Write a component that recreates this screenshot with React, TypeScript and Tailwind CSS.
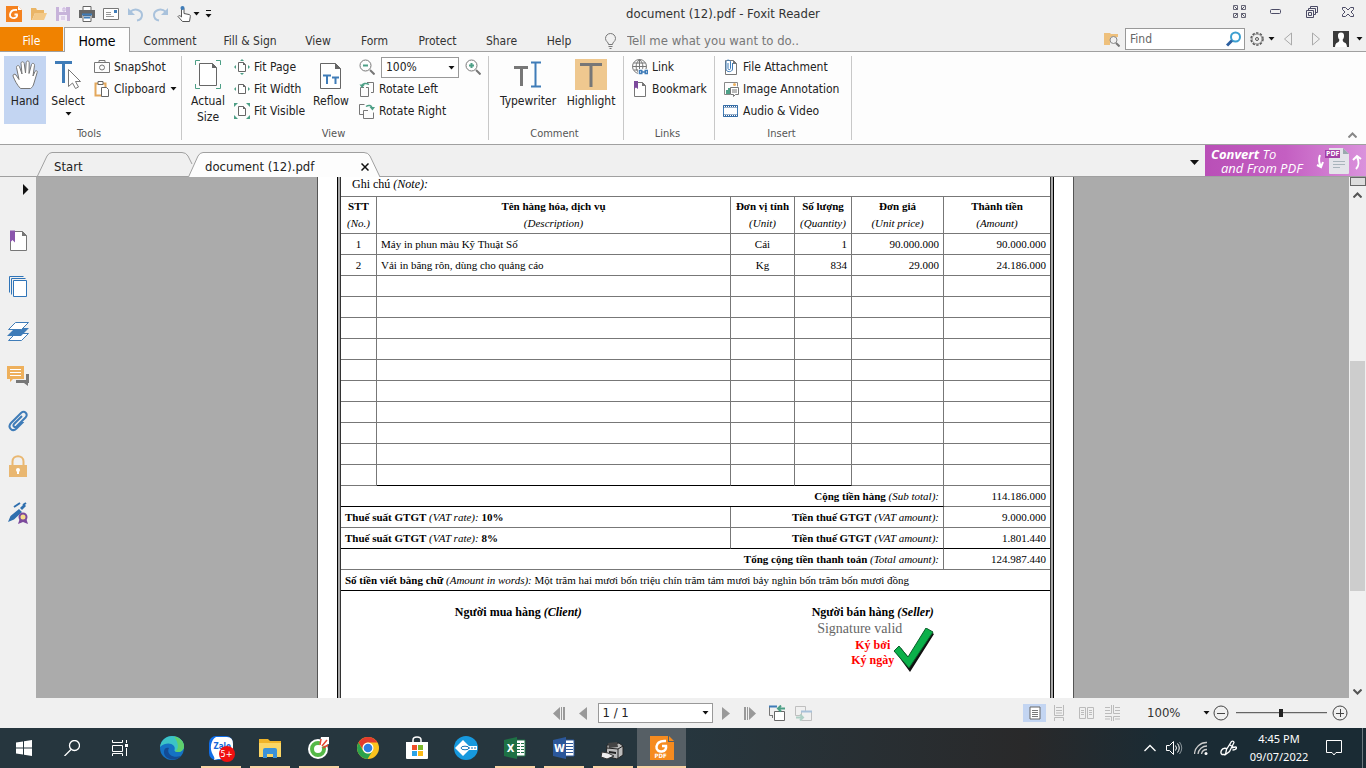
import type { ReactNode } from 'react';

type BoxProps = { w?: number; h?: number; children: ReactNode };

function Icon({ w = 16, h = 16, children }: BoxProps) {
  return (
    <svg width={w} height={h} viewBox={`0 0 ${w} ${h}`} fill="none" className="block shrink-0" aria-hidden="true">
      {children}
    </svg>
  );
}

function Caret() {
  return (
    <Icon w={7} h={4}>
      <path d="M0.500 0h6l-3 3.500z" fill="#111" />
    </Icon>
  );
}

/* ---------- title bar ---------- */

function QuickAccess() {
  return (
    <div className="flex w-[216px] items-center gap-2 pl-[6px]">
      <button aria-label="Foxit Reader">
        <Icon>
          <path d="M0 0h12l4 4v12H0z" fill="#f5821f" />
          <path d="M12 0l4 4h-4z" fill="#fff" />
          <path d="M11 4C7 3.500 4.500 5.500 4 8.500c-.3 2.500 2 4 4.500 3.500 2-.4 3-2 2.500-3.500H8.500" stroke="#fff" strokeWidth="1.800" />
        </Icon>
      </button>
      <button aria-label="Open" className="ml-px">
        <Icon>
          <path d="M0 2h5l1 2h7v3H4l-3 7H0z" fill="#eab566" />
          <path d="M4 7h12l-3 7H1z" fill="#f3c988" />
        </Icon>
      </button>
      <button aria-label="Save">
        <Icon>
          <path d="M1 1h14v14H1z" fill="#c7b3da" />
          <path d="M4 1h7v5H4zM4 9h8v6H4z" fill="#f3eef8" />
          <path d="M8 2h2v3H8zM6 11h4M6 13h4" stroke="#c7b3da" />
        </Icon>
      </button>
      <button aria-label="Print">
        <Icon>
          <path d="M4 0.500h8v4H4z" fill="#fff" stroke="#666" />
          <path d="M0 4h16v8h-3v-3H3v3H0z" fill="#666" />
          <path d="M4 9.500h8v6H4z" fill="#fff" stroke="#666" />
          <path d="M3 8.500h10M5 11.500h6" stroke="#3f7cb8" strokeWidth="2" />
        </Icon>
      </button>
      <button aria-label="Email">
        <Icon>
          <path d="M0.500 2.500h15v11h-15z" fill="#fff" stroke="#777" />
          <path d="M3 6.500h5M3 8.500h5M3 10.500h8" stroke="#999" />
          <path d="M11 4h3v3h-3z" fill="#3f7cb8" />
        </Icon>
      </button>
      <button aria-label="Undo" className="ml-px">
        <Icon>
          <path d="M2 6c5-4.500 12-2 12 3 0 3-2 5-5 5.500" stroke="#a9c2dc" strokeWidth="2" />
          <path d="M0 2v7h7z" fill="#a9c2dc" />
        </Icon>
      </button>
      <button aria-label="Redo">
        <Icon>
          <path d="M14 6C9 1.500 2 4 2 9c0 3 2 5 5 5.500" stroke="#a9c2dc" strokeWidth="2" />
          <path d="M16 2v7H9z" fill="#a9c2dc" />
        </Icon>
      </button>
      <button aria-label="Touch mode" className="flex items-center gap-px">
        <Icon>
          <path d="M5.500 9V3a1.200 1.200 0 0 1 2.500 0v4.500l5 1c1.200.3 1.500 1 1.300 2L13.500 15.500H6.500L2 10.500c.8-1.300 2-1 3.500.5z" fill="#fff" stroke="#555" />
          <circle cx="6.500" cy="2" r="2" fill="#3f7cb8" />
        </Icon>
        <Caret />
      </button>
      <button aria-label="Customize toolbar" className="-ml-[3px]">
        <Icon w={7} h={8}>
          <path d="M1 0.500h5" stroke="#111" />
          <path d="M0.500 4h6l-3 3.500z" fill="#111" />
        </Icon>
      </button>
    </div>
  );
}

function WindowButtons() {
  return (
    <div className="flex w-[136px] items-center justify-between pr-[12px] pl-[3px] pb-1">
      <button aria-label="Full screen">
        <Icon w={13} h={13}>
          <path d="M0.500 0.500h4v4h-4zM8.500 0.500h4v4h-4zM0.500 8.500h4v4h-4zM8.500 8.500h4v4h-4z" stroke="#667" />
          <path d="M1.500 1.500l3 3M11.500 1.500l-3 3M1.500 11.500l3-3M11.500 11.500l-3-3" stroke="#556" />
        </Icon>
      </button>
      <button aria-label="Minimize">
        <Icon w={12} h={6}>
          <rect x="0.500" y="0.500" width="10" height="4" rx="1" stroke="#4c4c66" />
        </Icon>
      </button>
      <button aria-label="Restore">
        <Icon w={12} h={12}>
          <path d="M0.500 4.500h7v7h-7zM2.500 6.500h3v3h-3z" stroke="#4c4c66" />
          <path d="M2.500 4.500v-2h7v6h-2M4.500 2.500v-2h7v6h-2" stroke="#4c4c66" />
        </Icon>
      </button>
      <button aria-label="Close">
        <Icon w={12} h={10}>
          <path d="M0.500 0.500h3L6 3l2.500-2.500h3v2L9 5l2.500 2.500v2h-3L6 7 3.500 9.500h-3v-2L3 5 0.500 2.500z" stroke="#4c4c66" />
        </Icon>
      </button>
    </div>
  );
}

/* ---------- ribbon tabs ---------- */

function RibbonTabs() {
  const tab = 'h-[24px] pt-[3px] text-center text-[12px] text-[#333]';
  return (
    <nav className="flex h-[25px] items-end border-b border-[#a0a0a0]">
      <button className="h-[24px] w-[63px] bg-[#f08200] pt-[3px] text-center text-[12px] text-white">File</button>
      <button className="relative z-10 ml-px -mb-px h-[25px] w-[66px] border border-b-0 border-[#a0a0a0] bg-[#fdfdfd] pt-[2px] text-center text-[14px] text-black">
        Home
      </button>
      <button className={`${tab} w-[80px]`}>Comment</button>
      <button className={`${tab} w-[80px]`}>Fill &amp; Sign</button>
      <button className={`${tab} w-[56px]`}>View</button>
      <button className={`${tab} w-[57px]`}>Form</button>
      <button className={`${tab} w-[69px]`}>Protect</button>
      <button className={`${tab} w-[59px]`}>Share</button>
      <button className={`${tab} w-[56px]`}>Help</button>
      <label className="ml-[17px] flex h-[24px] flex-1 items-center gap-[10px] pt-[3px]">
        <Icon w={13} h={16}>
          <path d="M4.500 11.500C4.500 9 1.500 8.500 1.500 5.500a5 5 0 0 1 10 0c0 3-3 3.500-3 6zM4.500 13.500h4M5.500 15.500h2" stroke="#777" />
        </Icon>
        <input
          type="text"
          placeholder="Tell me what you want to do.."
          className="w-[220px] bg-transparent outline-none placeholder:text-[#777]"
        />
      </label>
      <div className="flex h-[24px] items-center pr-[3px]">
        <button aria-label="Advanced search">
          <Icon>
            <path d="M0 2h6l1 1h7v3H6v8H0z" fill="#eec07c" />
            <circle cx="9.500" cy="9" r="3.500" fill="#f0f0f0" stroke="#888" />
            <path d="M12 12l3.500 3.500" stroke="#777" strokeWidth="2" />
          </Icon>
        </button>
        <label className="ml-[5px] flex h-[22px] w-[120px] items-center border border-[#999] bg-white pr-[2px] pl-1">
          <input type="text" placeholder="Find" aria-label="Find" className="min-w-0 flex-1 text-[12px] outline-none placeholder:text-[#666]" />
          <Icon>
            <circle cx="9.500" cy="6" r="4.500" stroke="#3c9fd0" strokeWidth="2" />
            <path d="M6 9.500L1 14.500" stroke="#2c5fa0" strokeWidth="3" />
          </Icon>
        </label>
        <button aria-label="Settings" className="ml-[5px] flex items-center gap-1">
          <Icon w={14} h={14}>
            <circle cx="7" cy="7" r="6" stroke="#555" strokeWidth="1.500" strokeDasharray="2.400 1.400" />
            <circle cx="7" cy="7" r="5" stroke="#888" />
            <circle cx="7" cy="7" r="1.500" stroke="#555" />
          </Icon>
          <Caret />
        </button>
        <button aria-label="Previous" className="ml-[8px]">
          <Icon w={10} h={14}>
            <path d="M8.500 1v12L1.500 7z" stroke="#aaa" />
          </Icon>
        </button>
        <button aria-label="Next" className="ml-[18px]">
          <Icon w={10} h={14}>
            <path d="M1.500 1v12l7-6z" stroke="#aaa" />
          </Icon>
        </button>
        <button aria-label="Account" className="ml-[12px] flex items-center gap-[7px]">
          <Icon>
            <path d="M0 0h16v16H0z" fill="#3a3a3a" />
            <path d="M8 1.500c2.300 0 3.300 1.500 3 4-.2 1.500-.7 2.500-1.300 3 0 2 .5 2.500 2.300 3.200 1.200.5 1.800 2 2 4.300H2c.2-2.300.8-3.800 2-4.300 1.800-.7 2.300-1.200 2.300-3.200C5.700 8 5.200 7 5 5.500c-.3-2.500.7-4 3-4z" fill="#fff" />
          </Icon>
          <Caret />
        </button>
      </div>
    </nav>
  );
}

/* ---------- ribbon ---------- */

function Group({ label, width, pad, children }: { label: string; width: string; pad: string; children: ReactNode }) {
  return (
    <section className={`${width} my-[4px] flex shrink-0 flex-col border-r border-[#c8c8c8]`}>
      <div className={`${pad} flex flex-1`}>{children}</div>
      <p className="h-[13px] pr-[3px] text-center text-[11px] leading-[13px] text-[#555]">{label}</p>
    </section>
  );
}

function Big({ icon, width, on, children }: { icon: ReactNode; width: string; on?: boolean; children: ReactNode }) {
  return (
    <button className={`${width} ${on ? 'bg-[#c3d5f2]' : ''} flex h-[68px] shrink-0 flex-col items-center pt-[3px] leading-4`}>
      {icon}
      <span className="mt-[2px] flex flex-col items-center">{children}</span>
    </button>
  );
}

function Small({ icon, children }: { icon: ReactNode; children: ReactNode }) {
  return (
    <button className="flex h-[22px] items-center gap-[4px] whitespace-nowrap">
      {icon}
      {children}
    </button>
  );
}

function PageGlyph({ x = 4, y = 3 }: { x?: number; y?: number }) {
  return (
    <g transform={`translate(${x} ${y})`}>
      <path d="M0.500 0.500h5l2 2.500v6.500h-7z" fill="#fff" stroke="#666" />
      <path d="M5 0v3h3z" fill="#666" />
    </g>
  );
}

function Ribbon() {
  return (
    <div className="flex h-[93px] border-b border-[#a0a0a0] bg-[#fdfdfd] text-[12px]">
      <Group label="Tools" width="w-[182px]" pad="pl-1">
        <Big
          width="w-[42px]"
          on
          icon={
            <Icon w={26} h={32}>
              <path
                d="M8.500 29.500C5 26 2.500 21 1 17c-.3-1.600 1.800-2.600 3-1l3 4.500-2.500-12c-.3-2 2.400-2.700 3-.8L10 15 9 4.500c0-2.200 2.800-2.300 3.200-.2L13.500 14l.7-10.500c.2-2 3-2 3 .2L17 14.500l2.500-9c.7-1.900 3.200-1.200 3 .8L21 17l2-4.500c1-1.500 2.700-.7 2.200.8L22 24c-.7 3-2 4.500-3.500 5.500z"
                fill="#fff"
                stroke="#777"
              />
            </Icon>
          }
        >
          Hand
        </Big>
        <Big
          width="w-[44px]"
          icon={
            <Icon w={28} h={32}>
              <path d="M1 3.500h17M9.500 3v21" stroke="#3f7cb8" strokeWidth="3" />
              <path d="M14.500 10.500v17l4-3.500 3 5.500 3-1.500-3-5.500h5z" fill="#fff" stroke="#777" />
            </Icon>
          }
        >
          Select
          <span className="mt-[3px]">
            <Caret />
          </span>
        </Big>
        <div className="ml-1 flex flex-col">
          <Small
            icon={
              <Icon>
                <path d="M0.500 3.500h15v10h-15zM5 3V1.500h6V3" stroke="#777" />
                <circle cx="8" cy="8.500" r="2.500" stroke="#777" />
              </Icon>
            }
          >
            SnapShot
          </Small>
          <Small
            icon={
              <Icon>
                <path d="M1.500 2.500h10v12h-10z" stroke="#e3a85c" strokeWidth="2" />
                <path d="M4 0.500h5v3H4z" fill="#fff" stroke="#666" />
                <path d="M7.500 6.500h5l2 2v7h-7z" fill="#fff" stroke="#666" />
              </Icon>
            }
          >
            Clipboard
            <Caret />
          </Small>
        </div>
      </Group>

      <Group label="View" width="w-[307px]" pad="pl-1">
        <Big
          width="w-[44px]"
          icon={
            <Icon w={28} h={32}>
              <path d="M6 1.500H1.500V6M22 1.500h4.500V6M1.500 25v4.500H6M26.500 25v4.500H22" stroke="#4d9f86" />
              <path d="M5.500 4.500h13l4 4v18h-17z" fill="#fff" stroke="#666" />
              <path d="M18 4v5h5z" fill="#666" />
            </Icon>
          }
        >
          Actual
          <span>Size</span>
        </Big>
        <div className="ml-1 flex flex-col">
          <Small
            icon={
              <Icon>
                <PageGlyph />
                <path d="M8 0l2 2H6zM8 16l2-2H6zM0 8l2-2v4zM16 8l-2-2v4z" fill="#4d9f86" />
              </Icon>
            }
          >
            Fit Page
          </Small>
          <Small
            icon={
              <Icon>
                <PageGlyph />
                <path d="M0 8l2-2v4zM16 8l-2-2v4z" fill="#4d9f86" />
              </Icon>
            }
          >
            Fit Width
          </Small>
          <Small
            icon={
              <Icon>
                <PageGlyph />
                <path d="M0 0h4L0 4zM16 0v4l-4-4zM0 16v-4l4 4zM16 16h-4l4-4z" fill="#4d9f86" />
              </Icon>
            }
          >
            Fit Visible
          </Small>
        </div>
        <div className="ml-auto flex">
          <Big
            width="w-[44px]"
            icon={
              <Icon w={24} h={32}>
                <path d="M1.500 4.500h15l5 5v20h-20z" fill="#fff" stroke="#666" />
                <path d="M16 4v6h6z" fill="#666" />
                <path d="M4 16.500h8M8 16v9M13 18.500h7M16.500 18v7" stroke="#3f7cb8" strokeWidth="2" />
              </Icon>
            }
          >
            Reflow
          </Big>
          <div className="ml-[6px] flex w-[129px] flex-col">
            <div className="flex h-[22px] items-center gap-[6px]">
              <button aria-label="Zoom out">
                <Icon>
                  <circle cx="6.500" cy="6.500" r="5.500" stroke="#777" />
                  <path d="M11 11l4.500 4.500" stroke="#777" strokeWidth="2" />
                  <path d="M4 6.500h5" stroke="#4d9f86" strokeWidth="2" />
                </Icon>
              </button>
              <div className="relative">
                <select aria-label="Zoom level" className="block h-[21px] w-[78px] appearance-none border border-[#999] bg-white pl-1 leading-4">
                  <option>100%</option>
                </select>
                <span className="pointer-events-none absolute top-[9px] right-1">
                  <Caret />
                </span>
              </div>
              <button aria-label="Zoom in">
                <Icon>
                  <circle cx="6.500" cy="6.500" r="5.500" stroke="#777" />
                  <path d="M11 11l4.500 4.500" stroke="#777" strokeWidth="2" />
                  <path d="M4 6.500h5M6.500 4v5" stroke="#4d9f86" strokeWidth="2" />
                </Icon>
              </button>
            </div>
            <Small
              icon={
                <Icon>
                  <path d="M8 1.500h6.500v10H12M5 6.500H1.500v9h8v-9H7" stroke="#777" />
                  <path d="M10 3.500C7 1.500 3.500 2.500 3 5" stroke="#4d9f86" strokeWidth="1.500" />
                  <path d="M0.500 3.500h5.500L3 7z" fill="#4d9f86" />
                </Icon>
              }
            >
              Rotate Left
            </Small>
            <Small
              icon={
                <Icon>
                  <path d="M4.500 11.500h-4v-10h5M9 7.500H4.500v8h10v-6" stroke="#777" />
                  <path d="M7 3.500c3-2 5.500-1 6 1.500" stroke="#4d9f86" strokeWidth="1.500" />
                  <path d="M10.500 4h5.500l-2.500 3.500z" fill="#4d9f86" />
                </Icon>
              }
            >
              Rotate Right
            </Small>
          </div>
        </div>
      </Group>

      <Group label="Comment" width="w-[135px]" pad="pl-[6px]">
        <Big
          width="w-[66px]"
          icon={
            <Icon w={30} h={32}>
              <path d="M1 8.500h14M8.500 8v19" stroke="#777" strokeWidth="3" />
              <path d="M18 3.500h4.500v23M28 3.500h-5.500M18 27.500h10" stroke="#3f7cb8" strokeWidth="2" />
            </Icon>
          }
        >
          Typewriter
        </Big>
        <Big
          width="w-[60px]"
          icon={
            <Icon w={32} h={32}>
              <path d="M0 0h32v31H0z" fill="#efc88f" />
              <path d="M5 5.500h22M16 5v23" stroke="#777" strokeWidth="3" />
            </Icon>
          }
        >
          Highlight
        </Big>
      </Group>

      <Group label="Links" width="w-[91px]" pad="pl-[8px]">
        <div className="flex flex-col">
          <Small
            icon={
              <Icon>
                <circle cx="7.500" cy="7.500" r="7" stroke="#777" />
                <path d="M7.500 0.500v14M0.500 7.500h14M1.500 4h12M2 11h8M7.500 0.500c-4.500 4-4.500 10 0 14M7.500 0.500c4.500 4 4.500 10 0 14" stroke="#777" />
                <path d="M6 10h10v6H6z" fill="#fdfdfd" />
                <path d="M10.500 11.500h-3v3h3M12.500 11.500h3v3h-3M9 13h5" stroke="#3f7cb8" strokeWidth="1.500" />
              </Icon>
            }
          >
            Link
          </Small>
          <Small
            icon={
              <Icon>
                <path d="M2.500 1.500h8l3 3v11h-11z" fill="#fff" stroke="#777" />
                <path d="M10 1v4h4z" fill="#777" />
                <path d="M2 0h4v8L4 6.500 2 8z" fill="#7c4a9c" />
              </Icon>
            }
          >
            Bookmark
          </Small>
        </div>
      </Group>

      <Group label="Insert" width="w-[137px]" pad="pl-[8px]">
        <div className="flex flex-col">
          <Small
            icon={
              <Icon>
                <path d="M3.500 1.500h7l3 3v11h-11v-14z" fill="#fff" stroke="#777" />
                <path d="M10 1v4h4z" fill="#777" />
                <path d="M5 4v5.500c0 1.500 2.500 1.500 2.500 0V3c0-2.500-4.500-2.500-4.500 0v7c0 3.500 6.500 3.500 6.500 0V4" stroke="#3f7cb8" />
              </Icon>
            }
          >
            File Attachment
          </Small>
          <Small
            icon={
              <Icon>
                <path d="M7 13.500H1.500v-12h13v4" stroke="#888" />
                <circle cx="11.500" cy="3.500" r="1.500" fill="#eeb05c" />
                <path d="M3 13V9h2v4zM5 7h2v6H5z" fill="#4d9f86" />
                <path d="M7.500 6.500h8v7h-3l-2 2v-2h-3z" fill="#fff" stroke="#777" />
                <path d="M9 9h5M9 11h5" stroke="#777" />
              </Icon>
            }
          >
            Image Annotation
          </Small>
          <Small
            icon={
              <Icon>
                <path d="M0.500 2.500h14v11h-14z" fill="#fff" stroke="#3f7cb8" />
                <path d="M0 3.500h15M0 12.500h15" stroke="#2f6299" strokeWidth="2" />
                <path d="M1 3.500h14M1 12.500h14" stroke="#fff" strokeDasharray="1 1" />
              </Icon>
            }
          >
            Audio &amp; Video
          </Small>
        </div>
      </Group>
      <div className="flex flex-1 items-end justify-end pr-[9px] pb-[6px]">
        <button aria-label="Collapse ribbon">
          <Icon w={9} h={6}>
            <path d="M0.500 5.500l4-4 4 4" stroke="#888" strokeWidth="2" />
          </Icon>
        </button>
      </div>
    </div>
  );
}

/* ---------- document tabs ---------- */

function DocTabs() {
  return (
    <div className="flex h-[32px] items-end border-b border-[#a0a0a0]">
      <button className="relative ml-[37px] h-[24px] w-[158px] pt-[5px] pl-[17px] text-left">
        <svg width="158" height="24" viewBox="0 0 158 24" className="absolute top-0 left-0" aria-hidden="true">
          <path d="M0.500 24L10 4q2-3.500 5-3.500h130q4 0 6 3.500l4 8" fill="#f0f0f0" stroke="#a0a0a0" />
        </svg>
        <span className="relative">Start</span>
      </button>
      <div className="relative z-10 -mb-px -ml-[7px] flex h-[25px] w-[193px] items-center pt-[4px] pr-[12px] pl-[17px]">
        <svg width="193" height="25" viewBox="0 0 193 25" className="absolute top-0 left-0" aria-hidden="true">
          <path d="M0.500 25L10 4q2-3.500 5-3.500h161q4 0 6 3.500l10 21" fill="#fdfdfd" stroke="#a0a0a0" />
        </svg>
        <button className="relative flex-1 text-left">document (12).pdf</button>
        <button aria-label="Close tab" className="relative">
          <Icon w={8} h={8}>
            <path d="M0.500 0.500l7 7M7.500 0.500l-7 7" stroke="#111" strokeWidth="1.500" />
          </Icon>
        </button>
      </div>
      <button aria-label="Tab list" className="mr-[6px] mb-[11px] ml-auto">
        <Icon w={9} h={5}>
          <path d="M0 0h9L4.500 5z" fill="#111" />
        </Icon>
      </button>
      <a
        href="#convert"
        className="flex h-[31px] w-[161px] items-center justify-between bg-linear-to-r from-[#b94fb7] via-[#c45fc2] to-[#da92dc] pl-[6px] font-['Open_Sans',sans-serif] text-[13px] leading-[14px] text-white italic"
      >
        <span>
          <b>Convert</b> To
          <span className="block pl-[10px]">and From PDF</span>
        </span>
        <span className="relative">
          <Icon w={50} h={31}>
            <path d="M13 3h14l6 6v19q0 1-1 1H14q-1 0-1-1z" fill="#e4e4ea" />
            <path d="M27 3l6 6h-6z" fill="#9aa9ae" />
            <path d="M17 16.500h12M17 19.500h12M17 22.500h7" stroke="#a9b4bc" />
            <path d="M4 10c-2 5-1 8 1 12M1 20l4 2 2-5" stroke="#fff" strokeWidth="2" />
            <path d="M40 24c3-3 3-8 1-12M37 15l4-4 4 3" stroke="#fff" strokeWidth="2" />
          </Icon>
          <b className="absolute top-[5px] left-[9px] bg-[#a33fa6] px-px text-[7px] leading-[8px] not-italic">PDF</b>
        </span>
      </a>
    </div>
  );
}

/* ---------- side panel ---------- */

function SideBar() {
  return (
    <aside className="flex w-[36px] shrink-0 flex-col items-center">
      <button aria-label="Expand panel" className="mt-[7px] mr-[7px] self-end">
        <Icon w={7} h={11}>
          <path d="M1 0l5.500 5.500L1 11z" fill="#111" />
        </Icon>
      </button>
      <div className="mt-[35px] flex flex-col gap-[23px]">
        <button aria-label="Bookmarks">
          <Icon w={22} h={22}>
            <path d="M3.500 1.500h12l4 4v15h-16z" fill="#fff" stroke="#777" />
            <path d="M15 1v5h5z" fill="#777" />
            <path d="M3 0.500h5v12L5.500 10 3 12.500z" fill="#8a56ac" />
          </Icon>
        </button>
        <button aria-label="Pages">
          <Icon w={22} h={22}>
            <path d="M2.500 17.500v-16h14M4.500 19.500v-16h14" stroke="#2f74b8" />
            <path d="M6.500 5.500h13v16h-13z" fill="#fff" stroke="#2f74b8" />
          </Icon>
        </button>
        <button aria-label="Layers">
          <Icon w={22} h={22}>
            <path d="M8.500 13.500h13l-7 7h-13z" fill="#fff" stroke="#3f7cb8" />
            <path d="M8 8h14l-8 8H0z" fill="#3f7cb8" />
            <path d="M8.500 2.500h13l-7 7h-13z" fill="#fff" stroke="#3f7cb8" />
          </Icon>
        </button>
        <button aria-label="Comments">
          <Icon w={22} h={22}>
            <path d="M19 9h3v9h-1v3l-4-3h-8v-3h10z" fill="#777" />
            <path d="M0 1h17v13H6l-3 3v-3H0z" fill="#eeb05c" />
            <path d="M3 4.500h11M3 7.500h11M3 10.500h11" stroke="#fff" />
          </Icon>
        </button>
        <button aria-label="Attachments">
          <Icon w={22} h={22}>
            <path d="M15 6l-8 8c-1.500 2 .5 4 2.500 2.500l9-9c3-3.500-1-7.500-4.500-4.500l-10 10c-4 4.500 1.500 9.500 5.500 5.500l7-7" stroke="#3f7cb8" strokeWidth="2" />
          </Icon>
        </button>
        <button aria-label="Security">
          <Icon w={22} h={22}>
            <path d="M5.500 11V6.500c0-7 11-7 11 0V11" stroke="#e9b771" strokeWidth="2" />
            <path d="M2 10h18v12H2z" fill="#e9b771" />
            <circle cx="11" cy="15" r="2" fill="#fff" />
            <path d="M10 15h2v4h-2z" fill="#fff" />
          </Icon>
        </button>
        <button aria-label="Digital signatures" className="mt-[2px]">
          <Icon w={22} h={22}>
            <path d="M1 20l2.500-6L12 7l3 3-8 7.500zM13 6l4-4 2 2-4 4z" fill="#2f6fae" />
            <path d="M7 5l6-4M16 3l3-2" stroke="#2f6fae" strokeWidth="2" />
            <path d="M13 16l-2 6 5-2 5 2-2-6z" fill="#7c4a9c" />
            <circle cx="16" cy="15" r="3.500" fill="#f6dc8a" stroke="#7c4a9c" strokeWidth="2" />
          </Icon>
        </button>
      </div>
    </aside>
  );
}

/* ---------- invoice ---------- */

const heads = [
  ['STT', '(No.)'],
  ['Tên hàng hóa, dịch vụ', '(Description)'],
  ['Đơn vị tính', '(Unit)'],
  ['Số lượng', '(Quantity)'],
  ['Đơn giá', '(Unit price)'],
  ['Thành tiền', '(Amount)'],
];

const items = [
  ['1', 'Máy in phun màu Kỹ Thuật Số', 'Cái', '1', '90.000.000', '90.000.000'],
  ['2', 'Vải in băng rôn, dùng cho quảng cáo', 'Kg', '834', '29.000', '24.186.000'],
  ...Array.from({ length: 10 }, () => ['', '', '', '', '', '']),
];

const aligns = ['text-center', 'text-left', 'text-center', 'text-right', 'text-right', 'text-right'];

function Invoice() {
  const cell = 'h-[21px] border-b px-1 pb-px leading-4 whitespace-nowrap';
  const grey = 'border-[#777]';
  return (
    <div className="h-full w-[757px] shrink-0 border-x border-[#555] bg-white px-[19px] font-['Liberation_Serif',serif] text-[11px] text-black">
      <div className="h-full border-x border-black bg-[#aaa] px-[2px]">
        <div className="h-full border-x border-[#333] bg-white">
          <p className="h-[19px] pl-[11px] text-[12px] leading-[14px]">
            Ghi chú <i>(Note):</i>
          </p>
          <table className="w-full table-fixed border-separate border-spacing-0">
            <colgroup>
              <col className="w-[36px]" />
              <col />
              <col className="w-[64px]" />
              <col className="w-[57px]" />
              <col className="w-[92px]" />
              <col className="w-[106px]" />
            </colgroup>
            <thead>
              <tr>
                {heads.map(([vi, en], i) => (
                  <th key={vi} className={`h-[38px] border-y ${i < 5 ? 'border-r' : ''} ${grey} p-0 pb-px leading-[17px] whitespace-nowrap`}>
                    {vi}
                    <i className="block font-normal">{en}</i>
                  </th>
                ))}
              </tr>
            </thead>
            <tbody>
              {items.map((row, r) => (
                <tr key={r}>
                  {row.map((text, c) => (
                    <td
                      key={c}
                      className={`${cell} ${aligns[c]} ${c < 5 ? 'border-r' : ''} ${grey} ${r === 11 && c > 0 && c < 4 ? 'border-b-black' : ''}`}
                    >
                      {text}
                    </td>
                  ))}
                </tr>
              ))}
              <tr>
                <td colSpan={5} className={`${cell} border-r border-r-[#777] border-b-black text-right`}>
                  <b>Cộng tiền hàng</b> <i>(Sub total):</i>
                </td>
                <td className={`${cell} ${grey} text-right`}>114.186.000</td>
              </tr>
              <tr>
                <td colSpan={2} className={`${cell} ${grey} border-r`}>
                  <b>Thuế suất GTGT</b> <i>(VAT rate):</i> <b>10%</b>
                </td>
                <td colSpan={3} className={`${cell} ${grey} border-r text-right`}>
                  <b>Tiền thuế GTGT</b> <i>(VAT amount):</i>
                </td>
                <td className={`${cell} ${grey} text-right`}>9.000.000</td>
              </tr>
              <tr>
                <td colSpan={2} className={`${cell} border-r border-r-[#777] border-b-black`}>
                  <b>Thuế suất GTGT</b> <i>(VAT rate):</i> <b>8%</b>
                </td>
                <td colSpan={3} className={`${cell} border-r border-r-[#777] border-b-black text-right`}>
                  <b>Tiền thuế GTGT</b> <i>(VAT amount):</i>
                </td>
                <td className={`${cell} border-black text-right`}>1.801.440</td>
              </tr>
              <tr>
                <td colSpan={5} className={`${cell} ${grey} border-r text-right`}>
                  <b>Tổng cộng tiền thanh toán</b> <i>(Total amount):</i>
                </td>
                <td className={`${cell} ${grey} text-right`}>124.987.440</td>
              </tr>
              <tr>
                <td colSpan={6} className={`${cell} border-black`}>
                  <b>Số tiền viết bằng chữ</b> <i>(Amount in words):</i> Một trăm hai mươi bốn triệu chín trăm tám mươi bảy nghìn bốn trăm bốn mươi đồng
                </td>
              </tr>
            </tbody>
          </table>
          <div className="grid grid-cols-2 pt-[13px] text-center text-[12px] leading-4 font-bold">
            <p>
              Người mua hàng <i>(Client)</i>
            </p>
            <div className="relative">
              <p>
                Người bán hàng <i>(Seller)</i>
              </p>
              <p className="pr-[26px] text-[14px] leading-[18px] font-normal text-[#666]">Signature valid</p>
              <p className="leading-[15px] text-[#f00]">Ký bởi</p>
              <p className="leading-[15px] text-[#f00]">Ký ngày</p>
              <span className="absolute top-[24px] left-[197px]">
                <Icon w={44} h={44}>
                  <path d="M3 25l5-5 8 10L35 2l6 4-24 38z" fill="#111" />
                  <path d="M1 23l5-5 9 11L33 0l7 4-24 36z" fill="#0bb04a" stroke="#0a5f2a" />
                </Icon>
              </span>
            </div>
          </div>
        </div>
      </div>
    </div>
  );
}

function ScrollBar() {
  return (
    <div className="flex w-[17px] shrink-0 flex-col items-center bg-[#f0f0f0] pb-[3px]">
      <button aria-label="Split view" className="h-[9px] w-[16px] border border-[#666] bg-[#ddd]" />
      <button aria-label="Scroll up" className="mt-[6px]">
        <Icon w={9} h={6}>
          <path d="M0.500 5.500l4-4 4 4" stroke="#555" strokeWidth="2" />
        </Icon>
      </button>
      <div className="flex w-[15px] flex-1 flex-col">
        <div className="flex-[163]" />
        <div className="flex-[229] bg-[#cdcdcd]" />
        <div className="flex-[98]" />
      </div>
      <button aria-label="Scroll down">
        <Icon w={9} h={6}>
          <path d="M0.500 0.500l4 4 4-4" stroke="#555" strokeWidth="2" />
        </Icon>
      </button>
    </div>
  );
}

/* ---------- status bar ---------- */

function StatusBar() {
  return (
    <footer className="flex h-[30px] shrink-0 items-center">
      <div className="flex-1" />
      <div className="flex items-center pl-4">
        <button aria-label="First page">
          <Icon w={13} h={13}>
            <path d="M7 0v13L0 6.500zM8 0h1v13H8zM10 0h2v13h-2z" fill="#999" />
          </Icon>
        </button>
        <button aria-label="Previous page" className="ml-[13px]">
          <Icon w={8} h={13}>
            <path d="M8 0v13L0 6.500z" fill="#999" />
          </Icon>
        </button>
        <div className="relative ml-[11px]">
          <select aria-label="Page" className="block h-[20px] w-[115px] appearance-none border border-[#999] bg-white pl-1 leading-4">
            <option>1 / 1</option>
          </select>
          <span className="pointer-events-none absolute top-[8px] right-1">
            <Caret />
          </span>
        </div>
        <button aria-label="Next page" className="ml-[9px]">
          <Icon w={8} h={13}>
            <path d="M0 0v13l8-6.500z" fill="#999" />
          </Icon>
        </button>
        <button aria-label="Last page" className="ml-[14px]">
          <Icon w={13} h={13}>
            <path d="M5 0v13l7-6.500zM3 0h1v13H3zM0 0h2v13H0z" fill="#999" />
          </Icon>
        </button>
        <button aria-label="Previous view" className="ml-[12px]">
          <Icon w={17} h={16}>
            <path d="M4 10.500H0.500v-9H8M3.500 10v3" stroke="#777" />
            <path d="M0 1.500h8" stroke="#3f7cb8" strokeWidth="2" />
            <path d="M5.500 6.500h10v9h-10z" fill="#fff" stroke="#666" />
            <path d="M9 3.500h7M12 0.500l-3 3 3 3" stroke="#4d9f86" strokeWidth="2" />
          </Icon>
        </button>
        <button aria-label="Next view" className="ml-[9px] opacity-40">
          <Icon w={17} h={16}>
            <path d="M0.500 1.500h10v9h-10z" stroke="#777" />
            <path d="M6.500 6.500h10v9h-10z" fill="#f0f0f0" stroke="#777" />
            <path d="M6 6.500h11" stroke="#3f7cb8" strokeWidth="2" />
            <path d="M1 12.500h7M5 9.500l3 3-3 3" stroke="#4d9f86" strokeWidth="2" />
          </Icon>
        </button>
      </div>
      <div className="flex flex-1 items-center justify-end pr-[18px]">
        <button aria-label="Single page" className="flex h-[18px] w-[23px] items-center justify-center bg-[#c3d5f2]">
          <Icon w={12} h={14}>
            <path d="M1 1h10v12H1z" fill="#fff" stroke="#666" />
            <path d="M3 4.500h6M3 6.500h6M3 8.500h6M3 10.500h6" stroke="#777" />
          </Icon>
        </button>
        <button aria-label="Continuous" className="ml-[7px]">
          <Icon w={12} h={16}>
            <path d="M1.500 0v10.500h9V0M1.500 16v-3.500h9V16M3 2.500h6M3 5.500h6M3 8h6" stroke="#bbb" />
          </Icon>
        </button>
        <button aria-label="Facing" className="ml-[14px]">
          <Icon w={16} h={14}>
            <path d="M0.500 1.500h6v11h-6zM8.500 1.500h6v11h-6zM2 4.500h3M2 6.500h3M2 8.500h3M10 4.500h3M10 6.500h3M10 8.500h3" stroke="#bbb" />
          </Icon>
        </button>
        <button aria-label="Continuous facing" className="ml-[10px]">
          <Icon w={16} h={16}>
            <path d="M0 8.500h6.500V0M15 8.500H8.500V0M0 11.500h6.500V16M15 11.500H8.500V16M0 2.500h5M0 5.500h5M10 2.500h5M10 5.500h5M0 14h5M10 14h5" stroke="#bbb" />
          </Icon>
        </button>
        <button className="ml-[26px] flex w-[63px] items-center justify-between text-[#333]">
          100%
          <Caret />
        </button>
        <button aria-label="Zoom out" className="ml-[3px]">
          <Icon>
            <circle cx="8" cy="8" r="7" stroke="#444" />
            <path d="M4 8.500h8" stroke="#444" />
          </Icon>
        </button>
        <input
          type="range"
          aria-label="Zoom"
          defaultValue={49}
          className="mr-[5px] ml-[7px] h-[8px] w-[91px] appearance-none bg-linear-to-b from-transparent from-40% via-[#444] via-40% to-transparent to-60% [&::-webkit-slider-thumb]:h-[8px] [&::-webkit-slider-thumb]:w-[4px] [&::-webkit-slider-thumb]:appearance-none [&::-webkit-slider-thumb]:bg-[#222]"
        />
        <button aria-label="Zoom in">
          <Icon>
            <circle cx="8" cy="8" r="7" stroke="#444" />
            <path d="M4 8.500h8M8.500 4v8" stroke="#444" />
          </Icon>
        </button>
      </div>
    </footer>
  );
}

/* ---------- taskbar ---------- */

function Task({ name, run, on, children }: { name: string; run?: boolean; on?: boolean; children: ReactNode }) {
  return (
    <button aria-label={name} className={`${on ? 'bg-[#565f65]' : ''} flex h-full w-[49px] flex-col items-center`}>
      <span className="flex flex-1 items-center pt-[2px]">{children}</span>
      <span className={`${on ? 'w-full' : 'w-[40px]'} ${run ? 'bg-[#f9d3a5]' : ''} h-[2px]`} />
    </button>
  );
}

function OfficeIcon({ letter, color, sheet }: { letter: string; color: string; sheet?: boolean }) {
  return (
    <svg width="22" height="22" viewBox="0 0 22 22" aria-hidden="true">
      <path d="M12 3h9v16h-9z" fill="#fff" stroke={color} />
      <path d="M13 6.500h7M13 9.500h7M13 12.500h7M13 15.500h7" stroke={color} />
      {sheet && <path d="M16.500 5v12" stroke="#fff" />}
      <path d="M0 3l13-3v22L0 19z" fill={color} />
      <text x="6.500" y="15" textAnchor="middle" fontSize="11" fontWeight="700" fill="#fff">
        {letter}
      </text>
    </svg>
  );
}

function TaskBar() {
  return (
    <div className="flex h-[40px] shrink-0 bg-linear-to-r from-[#26363e] from-50% via-[#29292a] via-75% to-[#1a2b34] to-85%">
      <div className="flex">
        <button aria-label="Start" className="flex w-[48px] items-center justify-center">
          <Icon>
            <path d="M0 2.500l7-1v6H0zM8 1.300L16 0v7.500H8zM0 8.500h7v6l-7-1zM8 8.500h8V16l-8-1.300z" fill="#fff" />
          </Icon>
        </button>
        <button aria-label="Search" className="flex w-[48px] items-center justify-center">
          <Icon>
            <circle cx="10.500" cy="5.500" r="5" stroke="#fff" strokeWidth="1.300" />
            <path d="M7 9.500L0.500 16" stroke="#fff" strokeWidth="1.300" />
          </Icon>
        </button>
        <button aria-label="Task view" className="mr-[3px] flex w-[48px] items-center justify-center">
          <Icon>
            <path d="M0.500 0v2.500h10V0M0.500 5.500h10v6h-10zM0.500 16v-2.500h10V16M14.500 0v3M14.500 8v8" stroke="#fff" />
            <path d="M13 4h3v3h-3z" fill="#fff" />
          </Icon>
        </button>
        <Task name="Microsoft Edge">
          <Icon w={24} h={24}>
            <circle cx="12" cy="12" r="12" fill="#1572c4" />
            <path d="M0 11C1 4 6 0 12 0c7 0 12 5 12 10 0 4-3 6-6 6-2 0-4-.7-3.500-2C16.500 9 8 4 0 11z" fill="#3cc4c6" />
            <path d="M14 0.500C20 1 24 6 24 10c0 4-3 6-6 6-1 0-2.500-.2-3-1 4-1 4-8-1-14.500z" fill="#5fd06c" />
            <path d="M9 12c-3 5 3 11 12 8-5 6-16 4-17-3-.5-4 2-6 5-5z" fill="#134b94" />
          </Icon>
        </Task>
        <Task name="Zalo" run>
          <span className="relative">
            <Icon w={24} h={24}>
              <rect width="24" height="24" rx="7" fill="#0f6de8" />
              <path d="M7 1h11q6 0 6 7v8q0 7-6 7H9l-4 1c1-2 0-3-1-5C0 12 2 4 7 1z" fill="#fff" />
            </Icon>
            <b className="absolute top-[6px] left-[5px] text-[8px] leading-[10px] text-[#1668d8]">Zalo</b>
            <span className="absolute top-[10px] left-[10px] h-[16px] w-[16px] rounded-full bg-[#f01010] text-center text-[9px] leading-4 text-white">5+</span>
          </span>
        </Task>
        <Task name="File Explorer" run>
          <Icon w={22} h={20}>
            <path d="M0 1h9l2 2h11v16H0z" fill="#f0b429" />
            <path d="M0 5h22v14H0z" fill="#fbd665" />
            <path d="M4 20v-8q0-2 2-2h10q2 0 2 2v8h-4v-4H8v4z" fill="#3b92d8" />
          </Icon>
        </Task>
        <Task name="Coc Coc" run>
          <Icon w={22} h={22}>
            <circle cx="10" cy="12" r="10" fill="#fff" />
            <circle cx="10" cy="12" r="6" stroke="#55b948" strokeWidth="4" />
            <path d="M11 11L13 0h8v7z" fill="#fff" />
            <path d="M12 8l1-6M14 9l5-6M15 11l5-3" stroke="#e5452f" strokeWidth="1.500" />
          </Icon>
        </Task>
        <Task name="Chrome">
          <Icon w={22} h={22}>
            <circle cx="11" cy="11" r="11" fill="#fcc31e" />
            <path d="M1.500 5.500A11 11 0 0 1 20.500 5.500H11a5.500 5.500 0 0 0-5 3.500l-.5 3z" fill="#e33b2e" />
            <path d="M1.500 5.500A11 11 0 0 0 10.500 22l4.700-7.500a5.500 5.500 0 0 1-9-.5z" fill="#2ba24c" />
            <circle cx="11" cy="11" r="5.500" fill="#fff" />
            <circle cx="11" cy="11" r="4.300" fill="#2f7de1" />
          </Icon>
        </Task>
        <Task name="Microsoft Store">
          <Icon w={24} h={24}>
            <path d="M8 6V4q0-3 4-3t4 3v2" stroke="#fff" strokeWidth="1.500" />
            <path d="M1 6h22v16q0 1-1 1H2q-1 0-1-1z" fill="#fff" />
            <path d="M7 9h5v5H7z" fill="#ee4f2a" />
            <path d="M13 9h5v5h-5z" fill="#7cb82a" />
            <path d="M7 15h5v5H7z" fill="#2aa3e8" />
            <path d="M13 15h5v5h-5z" fill="#fbb916" />
          </Icon>
        </Task>
        <Task name="Signer">
          <Icon w={24} h={24}>
            <circle cx="12" cy="12" r="12" fill="#1799de" />
            <path d="M1 12l8-8 6 6h8v4h-8l-6 6z" fill="#fff" />
            <ellipse cx="11" cy="12" rx="4" ry="1.800" stroke="#1776b8" />
            <path d="M14 12h8" stroke="#1776b8" strokeDasharray="2 1" />
          </Icon>
        </Task>
        <Task name="Excel" run>
          <OfficeIcon letter="X" color="#1e7145" sheet />
        </Task>
        <Task name="Word" run>
          <OfficeIcon letter="W" color="#2b579a" />
        </Task>
        <Task name="Printer" run>
          <span className="pt-[6px]">
            <Icon w={24} h={18}>
              <path d="M6 3l12-2 4 3v9l-6 4-11-3z" fill="#bbb" stroke="#222" />
              <path d="M7 1l9-1 1 5-9 1z" fill="#444" />
              <path d="M6 6l11 1 5-3M17 7v9" stroke="#222" />
              <path d="M8 9l7 1v2l-7-1z" fill="#222" />
              <path d="M1 10l6 1 6 3-7 3-6-2z" fill="#eee" stroke="#333" />
            </Icon>
          </span>
        </Task>
        <Task name="Foxit Reader" run on>
          <span className="relative">
            <Icon w={24} h={24}>
              <path d="M0 0h18v6h6v18H0z" fill="#f68b1f" />
              <path d="M19 0l5 5h-5z" fill="#f68b1f" />
              <path d="M16 5C10 4.500 7 7 6.500 10.500 6 14 9 16 12 15.500c3-.5 4.500-2.500 4-5.500h-4" stroke="#fff" strokeWidth="2.500" />
            </Icon>
            <b className="absolute bottom-0 left-[5px] text-[6px] leading-[8px] text-white">PDF</b>
          </span>
        </Task>
      </div>
      <div className="ml-auto flex items-center pr-[3px] text-white">
        <button aria-label="Show hidden icons">
          <Icon w={12} h={8}>
            <path d="M0.500 7L6 1.500 11.500 7" stroke="#fff" strokeWidth="1.300" />
          </Icon>
        </button>
        <button aria-label="Volume" className="ml-[10px]">
          <Icon w={17} h={16}>
            <path d="M0.500 5.500h3l4-4v13l-4-4h-3z" stroke="#fff" />
            <path d="M9.500 5.500q2 2.500 0 5M11.500 3.500q3.500 4.500 0 9" stroke="#fff" />
            <path d="M13.500 2q4.500 6 0 12" stroke="#8a949a" />
          </Icon>
        </button>
        <button aria-label="Wi-Fi" className="ml-[11px]">
          <Icon w={14} h={14}>
            <path d="M0.500 13A12 12 0 0 1 13 1.500M4 13a9 9 0 0 1 9-8M7.500 13A5.500 5.500 0 0 1 13 8.500" stroke="#ccc" strokeWidth="1.300" />
            <circle cx="12" cy="12.500" r="1.500" fill="#fff" />
          </Icon>
        </button>
        <button aria-label="Pen" className="ml-[12px]">
          <Icon w={17} h={16}>
            <path d="M6.500 8.500C1 7 0 13 2 14.500h3M5.500 14.500l1-5 5-8q2-1 2.500 1l-4.500 9zM10 5l4 2.500M12 8q5-2 4.500 0t-4 2" stroke="#fff" strokeWidth="1.300" />
          </Icon>
        </button>
        <p className="mr-px ml-[12px] w-[60px] text-center font-['Noto_Sans',sans-serif] text-[11px] leading-[18px] whitespace-nowrap">
          4:45 PM
          <br />
          09/07/2022
        </p>
        <button aria-label="Notifications" className="ml-4">
          <Icon w={16} h={16}>
            <path d="M0.500 0.500h15v12H10l-2 2.500-2-2.500H0.500z" stroke="#fff" />
          </Icon>
        </button>
        <span className="ml-[20px] h-full w-px bg-[#6d787e]" />
      </div>
    </div>
  );
}

export default function App() {
  return (
    <div className="flex h-screen flex-col overflow-hidden bg-[#f0f0f0] font-['DejaVu_Sans_Condensed','Noto_Sans',sans-serif] text-[13px] text-[#222]">
      <header className="flex h-[27px] shrink-0 items-center">
        <QuickAccess />
        <h1 className="flex-1 text-center text-[#333]">document (12).pdf - Foxit Reader</h1>
        <WindowButtons />
      </header>
      <RibbonTabs />
      <Ribbon />
      <DocTabs />
      <main className="flex min-h-0 flex-1">
        <SideBar />
        <div className="flex w-[6px] shrink-0 items-center justify-end bg-[#ababab] pb-[74px]">
          <span className="h-[44px] w-[4px] bg-[radial-gradient(#555_30%,transparent_31%)] bg-size-[2px_3px]" />
        </div>
        <div className="flex min-w-0 flex-1 justify-center overflow-hidden bg-[#ababab]">
          <Invoice />
        </div>
        <ScrollBar />
      </main>
      <StatusBar />
      <TaskBar />
    </div>
  );
}
